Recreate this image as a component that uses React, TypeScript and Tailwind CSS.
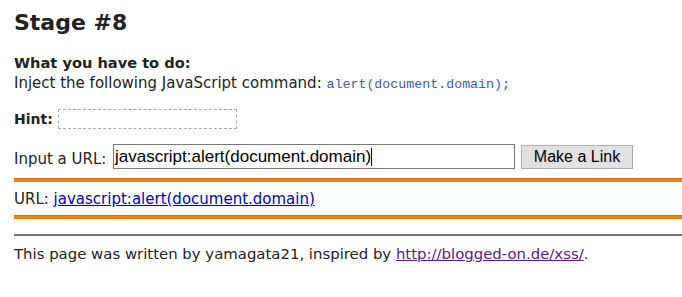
import React from 'react';

const body = "font-['DejaVu_Sans',Verdana,sans-serif]";

const App: React.FC = () => {
    return (
        <div className={`${body} min-h-[297px] bg-white text-[#222] pl-[14px] pt-[10px] overflow-hidden`}>
            <h1 className="text-[22px] leading-[26px] font-bold text-[#222]">Stage #8</h1>

            <div className="mt-[17px] text-[15px] leading-[20px]">
                <div className="font-bold text-[14.6px]">What you have to do:</div>
                <div className="whitespace-nowrap">
                    Inject the following JavaScript command:{' '}
                    <code className="font-['Liberation_Mono',monospace] text-[13.3px] text-[#3b5ba5]">alert(document.domain);</code>
                </div>
            </div>

            <div className="mt-[14px] flex items-center h-[20px] text-[15px]">
                <span className="w-[44px] font-bold text-[14px] leading-[20px]">Hint:</span>
                <span className="w-[179px] h-[20px] border border-dashed border-[#aaa]"></span>
            </div>

            <div className="mt-[15px] flex items-start h-[25px]">
                <span className="w-[99px] mt-[5px] text-[15px] leading-[20px] whitespace-nowrap">Input a URL:</span>
                <div className="w-[402px] h-[25px] border border-[#7a7a7a] bg-white pl-[1px] flex items-center font-['Liberation_Sans',Arial,sans-serif] text-[17px] text-black whitespace-nowrap">
                    javascript:alert(document.domain)
                    <span className="inline-block w-[1px] h-[18px] bg-black"></span>
                </div>
                <button className="ml-[6px] mt-[1px] w-[112px] h-[24px] bg-[#e1e1e1] border border-[#adadad] font-['Liberation_Sans',Arial,sans-serif] text-[16px] text-black leading-[22px]">
                    Make a Link
                </button>
            </div>

            <div className="mt-[9px] h-[4px] bg-[#ff8000] border-t border-[#d86c00]"></div>
            <div className="bg-[#fcfffe] pt-[7px] pb-[6px] text-[15px] leading-[20px] whitespace-nowrap">
                URL: <a href="#" className="text-[#0000cc] underline">javascript:alert(document.domain)</a>
            </div>
            <div className="h-[4px] bg-[#ff8000] border-t border-[#d86c00]"></div>

            <div className="mt-[15px] h-[2px] bg-[#777]"></div>
            <div className="mt-[8px] text-[14.9px] leading-[20px] whitespace-nowrap">
                This page was written by yamagata21, inspired by{' '}
                <a href="#" className="text-[#551a8b] underline">http://blogged-on.de/xss/</a>.
            </div>
        </div>
    );
};

export default App;
